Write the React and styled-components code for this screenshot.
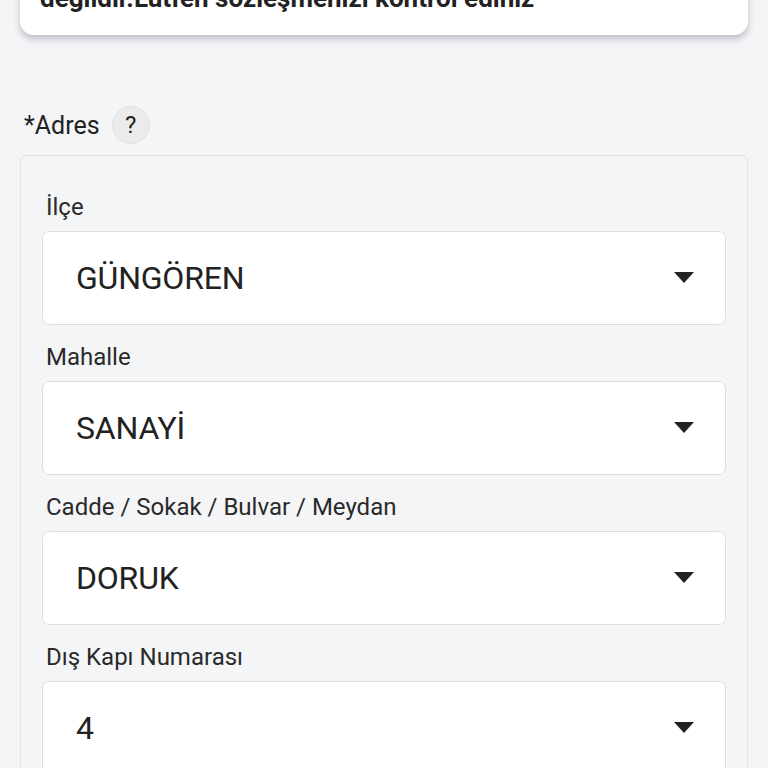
import React from "react";
import styled, { createGlobalStyle } from "styled-components";

const GlobalStyle = createGlobalStyle`
  html, body {
    margin: 0;
    padding: 0;
    background: #f4f5f7;
    font-family: Roboto, "Noto Sans", Arial, sans-serif;
    color: #222;
    overflow: hidden;
  }
`;

const Page = styled.div`
  padding: 0 20px;
  display: flex;
  flex-direction: column;
`;

const NoticeCard = styled.div`
  margin-top: -38px;
  background: #fff;
  border-radius: 14px;
  padding: 20px 20px 21px;
  box-shadow: 0 4px 7px rgba(60, 64, 90, 0.3);
  font-size: 26px;
  line-height: 32px;
  font-weight: 700;
  color: #222;
  white-space: nowrap;
  overflow: hidden;
`;

const SectionHead = styled.div`
  margin-top: 70px;
  margin-left: 4px;
  display: flex;
  align-items: center;
  gap: 12px;
  height: 40px;
  font-size: 25px;
  color: #222;
`;

const HelpBadge = styled.span`
  width: 38px;
  height: 38px;
  border-radius: 50%;
  background: #ebebeb;
  border: 1px solid #e2e2e2;
  box-sizing: border-box;
  display: flex;
  align-items: center;
  justify-content: center;
  font-size: 24px;
  color: #222;
`;

const Panel = styled.fieldset`
  margin: 10px 0 0;
  padding: 37px 21px 40px;
  border: 1px solid #e1e2e5;
  border-radius: 6px;
  display: flex;
  flex-direction: column;
  gap: 18px;
`;

const Field = styled.div`
  display: flex;
  flex-direction: column;
`;

const Label = styled.label`
  font-size: 24px;
  line-height: 28px;
  color: #2a2a2a;
  margin: 0 0 10px 4px;
`;

const SelectBox = styled.div`
  height: 94px;
  box-sizing: border-box;
  background: #fff;
  border: 1px solid #dcdde0;
  border-radius: 7px;
  display: flex;
  align-items: center;
  justify-content: space-between;
  padding: 0 31px 0 33px;
`;

const Value = styled.span`
  font-size: 32px;
  color: #222;
  letter-spacing: -0.2px;
`;

const Caret = () => (
  <svg width="20" height="12" viewBox="0 0 20 12">
    <polygon points="0,0 20,0 10,11" fill="#222" />
  </svg>
);

const fields = [
  { label: "İlçe", value: "GÜNGÖREN" },
  { label: "Mahalle", value: "SANAYİ" },
  { label: "Cadde / Sokak / Bulvar / Meydan", value: "DORUK" },
  { label: "Dış Kapı Numarası", value: "4" },
];

export default function App() {
  return (
    <Page>
      <GlobalStyle />
      <NoticeCard>değildir.Lütfen sözleşmenizi kontrol ediniz</NoticeCard>
      <SectionHead>
        *Adres
        <HelpBadge>?</HelpBadge>
      </SectionHead>
      <Panel>
        {fields.map((f) => (
          <Field key={f.label}>
            <Label>{f.label}</Label>
            <SelectBox>
              <Value>{f.value}</Value>
              <Caret />
            </SelectBox>
          </Field>
        ))}
      </Panel>
    </Page>
  );
}
